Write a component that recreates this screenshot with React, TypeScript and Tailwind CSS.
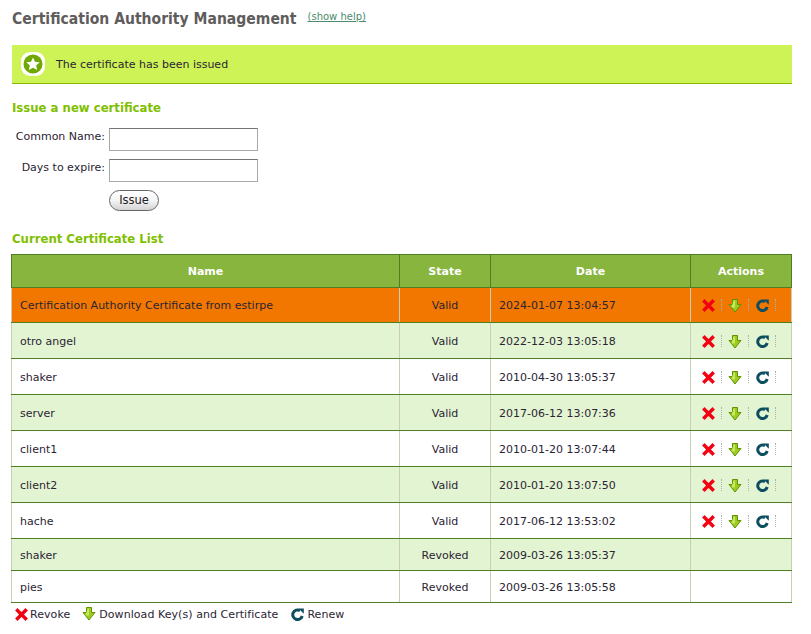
function X({ s = 13 }: { s?: number }) {
  return (
    <svg width={s} height={s} viewBox="0 0 13 13" className="block">
      <path d="M2.5 2.5L10.5 10.5M10.5 2.5L2.5 10.5" stroke="#f40012" strokeWidth="3.4" strokeLinecap="square" />
    </svg>
  );
}
function Down({ s = 14 }: { s?: number }) {
  return (
    <svg width={s} height={s} viewBox="0 0 14 14" className="block">
      <path d="M4.5 0.5H9.5V5.5H13L7 13L1 5.5H4.5Z" fill="#9ccc20" stroke="#5f9200" strokeWidth="1" />
      <path d="M5.5 1.5H7V8.5H3.5Z" fill="#c8e860" />
    </svg>
  );
}
function Renew({ s = 13 }: { s?: number }) {
  return (
    <svg width={s} height={s} viewBox="0 0 13 13" className="block">
      <path d="M11.2 8A4.8 4.8 0 1 1 9 2.6" fill="none" stroke="#0d4f5f" strokeWidth="3" />
      <path d="M7.5 0.5L12.8 0.5L12.8 5.8Z" fill="#0d4f5f" />
    </svg>
  );
}
function Sep() {
  return <span className="block h-[12px] border-l border-dotted border-[#a8b4b4]" />;
}
function Actions() {
  return (
    <div className="flex items-center h-[14px] pl-[11px]">
      <span className="w-[13px] mt-[1px]"><X /></span>
      <span className="ml-[6px] mr-[6px]"><Sep /></span>
      <span className="w-[14px] mt-[2px]"><Down /></span>
      <span className="ml-[6px] mr-[7px]"><Sep /></span>
      <span className="w-[13px] mt-[1px]"><Renew /></span>
      <span className="ml-[6px]"><Sep /></span>
    </div>
  );
}
const rows = [
  ["Certification Authority Certificate from estirpe", "Valid", "2024-01-07 13:04:57", 1],
  ["otro angel", "Valid", "2022-12-03 13:05:18", 1],
  ["shaker", "Valid", "2010-04-30 13:05:37", 1],
  ["server", "Valid", "2017-06-12 13:07:36", 1],
  ["client1", "Valid", "2010-01-20 13:07:44", 1],
  ["client2", "Valid", "2010-01-20 13:07:50", 1],
  ["hache", "Valid", "2017-06-12 13:53:02", 1],
  ["shaker", "Revoked", "2009-03-26 13:05:37", 0],
  ["pies", "Revoked", "2009-03-26 13:05:58", 0],
] as const;

export default function App() {
  const cell = "border-l border-[#c9cfb4] border-b border-b-[#4f7f22] p-0 align-middle";
  const condensed = "font-['DejaVu_Sans_Condensed','DejaVu_Sans',sans-serif]";
  return (
    <div className="w-[811px] h-[634px] overflow-hidden bg-white text-[11px] text-[#2b2433] font-['DejaVu_Sans',sans-serif] pl-[12px] pr-[19px]">
      <div className="flex items-start pt-[10px] h-[45px]">
        <h1 className={`text-[15.55px] leading-[19px] font-bold text-[#5f5c5c] ${condensed}`}>Certification Authority Management</h1>
        <a className="ml-[11px] text-[10px] leading-[14px] text-[#4d8a6e] underline">(show help)</a>
      </div>
      <div className="flex items-center h-[39px] bg-[#cef356] border-b border-[#86b800]">
        <svg width="26" height="26" viewBox="0 0 26 26" className="ml-[8px]">
          <rect x="1" y="1" width="24" height="24" rx="9" fill="#fff" />
          <circle cx="13" cy="13" r="9.5" fill="#6fa800" />
          <path d="M13 6.5L15 10.8L19.7 11.3L16.2 14.5L17.2 19L13 16.7L8.8 19L9.8 14.5L6.3 11.3L11 10.8Z" fill="#fff" />
        </svg>
        <span className="ml-[10px] mt-[2px]">The certificate has been issued</span>
      </div>
      <h2 className={`mt-[15px] text-[13px] leading-[17px] font-bold text-[#7fbf00] ${condensed}`}>Issue a new certificate</h2>
      <div className="mt-[12px] grid grid-cols-[93px_149px] gap-x-[4px] gap-y-[8px] items-center">
        <label className="text-right mb-[4px]">Common Name:</label>
        <input className="h-[23px] border border-[#a9a9a9] border-t-[#757575] bg-white" />
        <label className="text-right mb-[4px]">Days to expire:</label>
        <input className="h-[23px] border border-[#a9a9a9] border-t-[#757575] bg-white" />
        <span />
        <button className="w-[50px] h-[21px] rounded-full border border-[#66666a] bg-gradient-to-b from-white via-[#f4f4f4] to-[#d4d4d4] text-[11.5px] leading-[17px] text-[#222]">Issue</button>
      </div>
      <h2 className={`mt-[20px] text-[13px] leading-[16px] font-bold text-[#7fbf00] ${condensed}`}>Current Certificate List</h2>
      <table className="mt-[7px] ml-[-1px] w-[780px] table-fixed border-collapse border-r border-r-[#c9cfb4]">
        <colgroup>
          <col className="w-[388px]" />
          <col className="w-[91px]" />
          <col className="w-[200px]" />
          <col className="w-[101px]" />
        </colgroup>
        <thead>
          <tr className="h-[33px] bg-[#88b53e] text-white">
            {["Name", "State", "Date", "Actions"].map((h) => (
              <th key={h} className="border border-[#4f7f22] text-center font-bold text-[11px] p-0 pt-[2px]">{h}</th>
            ))}
          </tr>
        </thead>
        <tbody>
          {rows.map((r, i) => {
            const bg = i === 0 ? "bg-[#f27700]" : i % 2 === 1 ? "bg-[#e3f4d2]" : "bg-white";
            const height = i === 0 ? "h-[35px]" : i >= 7 ? "h-[32px]" : "h-[36px]";
            const pad = i === 0 ? "pt-[2px]" : "pt-[4px]";
            return (
              <tr key={i} className={`${height} ${bg}`}>
                <td className={`${cell} ${pad} pl-[8px]`}>{r[0]}</td>
                <td className={`${cell} ${pad} text-center`}>{r[1]}</td>
                <td className={`${cell} ${pad} pl-[8px]`}>{r[2]}</td>
                <td className={cell}>{r[3] ? <Actions /> : null}</td>
              </tr>
            );
          })}
        </tbody>
      </table>
      <div className="mt-[4px] flex items-center h-[16px] pl-[3px] tracking-[0.06px]">
        <span className="mb-[1px]"><X /></span>
        <span className="ml-[2px]">Revoke</span>
        <span className="ml-[12px] mb-[3px]"><Down /></span>
        <span className="ml-[3px]">Download Key(s) and Certificate</span>
        <span className="ml-[13px] mb-[2px]"><Renew /></span>
        <span className="ml-[3px]">Renew</span>
      </div>
    </div>
  );
}
